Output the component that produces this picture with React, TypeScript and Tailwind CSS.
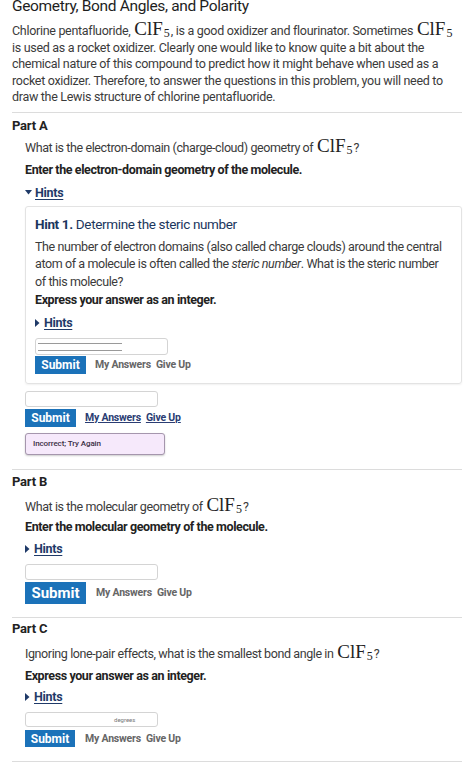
import React from "react";

const ClF5 = () => (
  <span className="inline-block leading-[0] align-baseline font-['Liberation_Serif',serif] text-[19px] tracking-normal text-[#222] mx-[1px]">
    ClF<sub className="text-[12px] relative top-[2px] align-baseline ml-[1px]">5</sub>
  </span>
);

const Tri = ({ open }: { open?: boolean }) =>
  open ? (
    <svg width="7" height="5" viewBox="0 0 7 5" className="inline-block mr-[3px] mb-[2px]">
      <path d="M0 0 L7 0 L3.5 4.5 Z" fill="#1f3a68" />
    </svg>
  ) : (
    <svg width="5" height="8" viewBox="0 0 5 8" className="inline-block mr-[4px] mb-[1px]">
      <path d="M0 0 L4.5 4 L0 8 Z" fill="#1f3a68" />
    </svg>
  );

const Hints = ({ open, className = "" }: { open?: boolean; className?: string }) => (
  <div className={`h-[18px] leading-[18px] text-[12.5px] tracking-[-0.3px] font-bold text-[#1f3a68] flex items-center ${className}`}>
    <Tri open={open} />
    <span className="underline underline-offset-2">Hints</span>
  </div>
);

const Hr = ({ className = "" }: { className?: string }) => (
  <div className={`h-px bg-[#dcdcdc] ${className}`} />
);

export default function App() {
  return (
    <div className="w-[474px] h-[769px] overflow-hidden bg-white font-['Roboto',sans-serif] text-[#3b3b3b]">
      <div className="px-[12px]">
        <div className="mt-[-4px] h-[20px] leading-[20px] text-[15.5px] tracking-[-0.35px] text-[#1e1e1e]">
          Geometry, Bond Angles, and Polarity
        </div>
        <p className="mt-[7px] text-[12.5px] tracking-[-0.3px] leading-[16.5px]">
          Chlorine pentafluoride, <ClF5 />, is a good oxidizer and flourinator. Sometimes <ClF5 /> is used as a rocket
          oxidizer. Clearly one would like to know quite a bit about the chemical nature of this compound to predict how it
          might behave when used as a rocket oxidizer. Therefore, to answer the questions in this problem, you will need to
          draw the Lewis structure of chlorine pentafluoride.
        </p>
        <Hr className="mt-[6.5px]" />

        {/* Part A */}
        <div className="mt-[4px] h-[18px] leading-[18px] text-[13px] tracking-[-0.2px] font-bold text-[#222]">Part A</div>
        <div className="pl-[13px]">
          <div className="mt-[3px] h-[20px] leading-[20px] text-[12.5px] tracking-[-0.4px]">
            What is the electron-domain (charge-cloud) geometry of <ClF5 />?
          </div>
          <div className="mt-[3px] h-[18px] leading-[18px] text-[12.5px] tracking-[-0.4px] font-bold text-[#222]">
            Enter the electron-domain geometry of the molecule.
          </div>
          <Hints open className="mt-[5px]" />
          <div className="mt-[4px] border border-[#e3e3e3] rounded-[3px] shadow-[0_1px_2px_rgba(0,0,0,0.06)] pl-[9px] pr-[10px] pt-[7px] pb-[9px]">
            <div className="h-[20px] leading-[20px] text-[13.5px] tracking-[-0.35px] text-[#1b365d]">
              <span className="font-bold">Hint 1.</span> Determine the steric number
            </div>
            <p className="mt-[3.5px] text-[12.5px] tracking-[-0.4px] leading-[17.5px]">
              The number of electron domains (also called charge clouds) around the central atom of a molecule is often
              called the <i>steric number</i>. What is the steric number of this molecule?
            </p>
            <div className="mt-[1px] h-[18px] leading-[18px] text-[12.5px] tracking-[-0.4px] font-bold text-[#222]">
              Express your answer as an integer.
            </div>
            <Hints className="mt-[5px]" />
            <div className="mt-[6px] w-[133px] h-[17px] border border-[#d4d4d4] rounded-[3px] flex flex-col justify-center gap-[6px] pl-[2px]">
              <div className="w-[84px] h-px bg-[#9a9a9a]" />
              <div className="w-[84px] h-px bg-[#9a9a9a]" />
            </div>
            <div className="mt-[1px] flex items-center">
              <div className="w-[51px] h-[18px] bg-[#1b72b9] text-white text-[12px] font-bold flex items-center justify-center">
                Submit
              </div>
              <span className="ml-[9px] text-[10.5px] tracking-[-0.2px] font-bold text-[#666]">My Answers</span>
              <span className="ml-[5px] text-[10.5px] tracking-[-0.2px] font-bold text-[#666]">Give Up</span>
            </div>
          </div>
          <div className="mt-[7px] w-[133px] h-[16px] border border-[#d4d4d4] rounded-[3px]" />
          <div className="mt-[2px] flex items-center">
            <div className="w-[51px] h-[18px] bg-[#1b72b9] text-white text-[12px] font-bold flex items-center justify-center">
              Submit
            </div>
            <span className="ml-[9px] text-[10.5px] tracking-[-0.2px] font-bold text-[#2b3d73] underline">My Answers</span>
            <span className="ml-[5px] text-[10.5px] tracking-[-0.2px] font-bold text-[#2b3d73] underline">Give Up</span>
          </div>
          <div className="mt-[6px] w-[140px] h-[22px] bg-[#f6e9fb] border border-[#a596ad] rounded-[3px] shadow-[0_1px_2px_rgba(0,0,0,0.2)] flex items-center pl-[7px] text-[8px] tracking-[-0.1px] font-medium text-[#3a2f44]">
            Incorrect; Try Again
          </div>
        </div>
        <Hr className="mt-[14px]" />

        {/* Part B */}
        <div className="mt-[3px] h-[18px] leading-[18px] text-[13px] tracking-[-0.2px] font-bold text-[#222]">Part B</div>
        <div className="pl-[13px]">
          <div className="mt-[6px] h-[20px] leading-[20px] text-[12.5px] tracking-[-0.4px]">
            What is the molecular geometry of <ClF5 />?
          </div>
          <div className="mt-[1px] h-[18px] leading-[18px] text-[12.5px] tracking-[-0.4px] font-bold text-[#222]">
            Enter the molecular geometry of the molecule.
          </div>
          <Hints className="mt-[4px]" />
          <div className="mt-[6px] w-[133px] h-[16px] border border-[#d4d4d4] rounded-[3px]" />
          <div className="mt-[2px] flex items-center">
            <div className="w-[61px] h-[22px] bg-[#1b72b9] text-white text-[15px] font-bold flex items-center justify-center">
              Submit
            </div>
            <span className="ml-[10px] text-[10.5px] tracking-[-0.2px] font-bold text-[#666]">My Answers</span>
            <span className="ml-[5px] text-[10.5px] tracking-[-0.2px] font-bold text-[#666]">Give Up</span>
          </div>
        </div>
        <Hr className="mt-[13px]" />

        {/* Part C */}
        <div className="mt-[2px] h-[18px] leading-[18px] text-[13px] tracking-[-0.2px] font-bold text-[#222]">Part C</div>
        <div className="pl-[13px]">
          <div className="mt-[6px] h-[20px] leading-[20px] text-[12.5px] tracking-[-0.4px]">
            Ignoring lone-pair effects, what is the smallest bond angle in <ClF5 />?
          </div>
          <div className="mt-[3px] h-[18px] leading-[18px] text-[12.5px] tracking-[-0.4px] font-bold text-[#222]">
            Express your answer as an integer.
          </div>
          <Hints className="mt-[3px]" />
          <div className="mt-[6px] w-[133px] h-[15px] border border-[#d4d4d4] rounded-[3px] flex items-center pl-[88px] text-[6px] text-[#777]">
            degrees
          </div>
          <div className="mt-[3px] flex items-center">
            <div className="w-[50px] h-[17px] bg-[#1b72b9] text-white text-[12px] font-bold flex items-center justify-center">
              Submit
            </div>
            <span className="ml-[10px] text-[10.5px] tracking-[-0.2px] font-bold text-[#666]">My Answers</span>
            <span className="ml-[5px] text-[10.5px] tracking-[-0.2px] font-bold text-[#666]">Give Up</span>
          </div>
        </div>
        <Hr className="mt-[14px]" />
        <div className="mt-[3px] h-[18px] leading-[18px] text-[13px] font-bold text-[#222]">Part D</div>
      </div>
    </div>
  );
}
